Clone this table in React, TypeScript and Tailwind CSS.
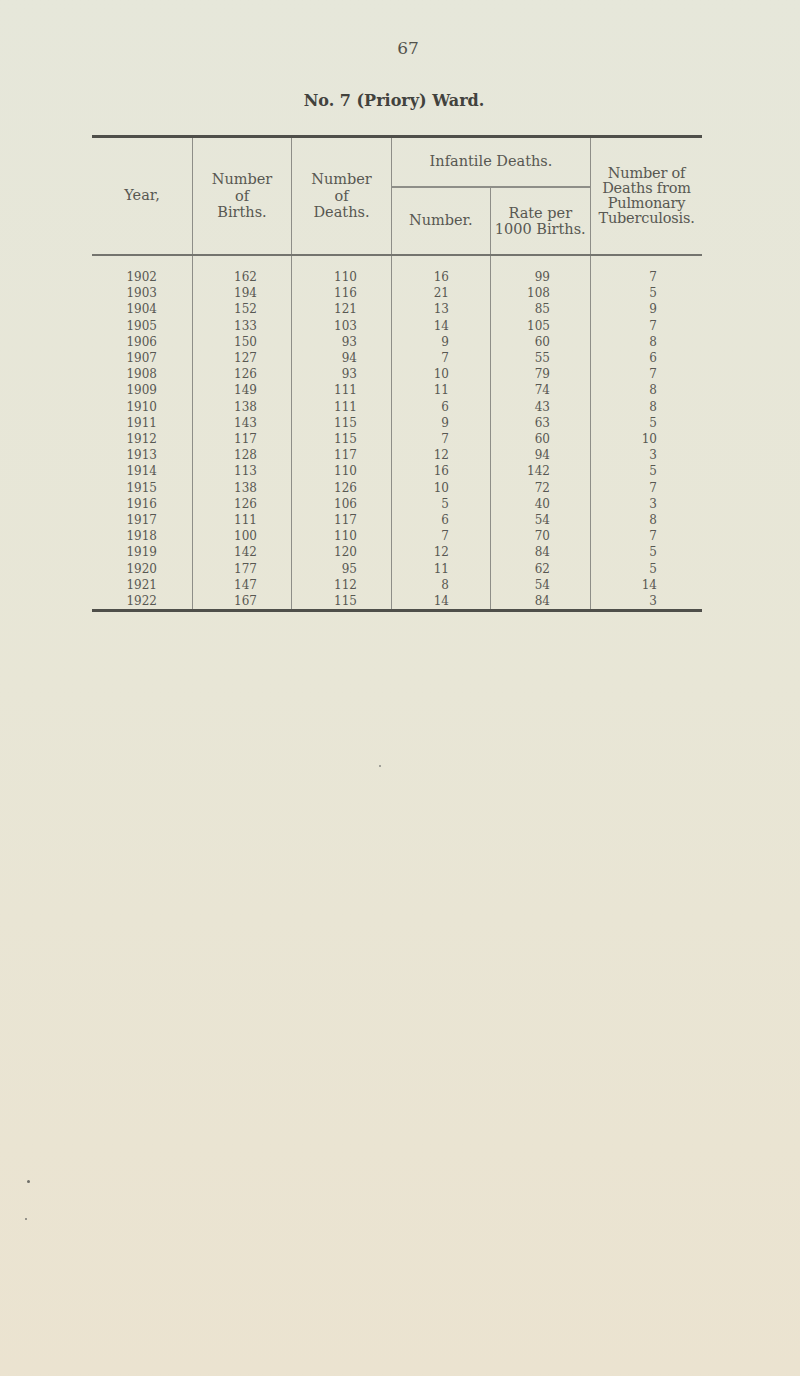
const rows: string[][] = [
  ["1902", "162", "110", "16", "99", "7"],
  ["1903", "194", "116", "21", "108", "5"],
  ["1904", "152", "121", "13", "85", "9"],
  ["1905", "133", "103", "14", "105", "7"],
  ["1906", "150", "93", "9", "60", "8"],
  ["1907", "127", "94", "7", "55", "6"],
  ["1908", "126", "93", "10", "79", "7"],
  ["1909", "149", "111", "11", "74", "8"],
  ["1910", "138", "111", "6", "43", "8"],
  ["1911", "143", "115", "9", "63", "5"],
  ["1912", "117", "115", "7", "60", "10"],
  ["1913", "128", "117", "12", "94", "3"],
  ["1914", "113", "110", "16", "142", "5"],
  ["1915", "138", "126", "10", "72", "7"],
  ["1916", "126", "106", "5", "40", "3"],
  ["1917", "111", "117", "6", "54", "8"],
  ["1918", "100", "110", "7", "70", "7"],
  ["1919", "142", "120", "12", "84", "5"],
  ["1920", "177", "95", "11", "62", "5"],
  ["1921", "147", "112", "8", "54", "14"],
  ["1922", "167", "115", "14", "84", "3"],
];

// width + right padding so the figures line up like the printed columns
const cols = [
  "w-[101px] pr-[35px] border-r border-[#8e8e88]",
  "w-[99px] pr-[34px] border-r border-[#8e8e88]",
  "w-[100px] pr-[34px] border-r border-[#8e8e88]",
  "w-[99px] pr-[41px] border-r border-[#8e8e88]",
  "w-[100px] pr-[40px] border-r border-[#8e8e88]",
  "w-[111px] pr-[45px]",
];

const serif = "font-['DejaVu_Serif',serif]";

export default function App() {
  return (
    <div className={`relative w-full h-[1376px] overflow-hidden bg-gradient-to-b from-[#e6e7da] via-[#e8e6d6] to-[#ebe3d0] ${serif}`}>
      {/* page number */}
      <div className="pt-[37px] pl-[16px] text-center text-[17px] leading-[22px] text-[#52524c]">67</div>

      {/* title */}
      <div className="mt-[32px] pr-[12px] text-center text-[16px] leading-[20px] font-bold text-[#42423d]">
        No. 7 (Priory) Ward.
      </div>

      {/* table */}
      <div className="mt-[24px] ml-[92px] w-[610px] border-t-[3px] border-[#4f4f4a] text-[#585852]">
        {/* header */}
        <div className="flex h-[118px] border-b-2 border-[#74746e] text-[14.5px] text-center">
          <div className="w-[101px] border-r border-[#8e8e88] flex items-center justify-center">Year,</div>
          <div className="w-[99px] border-r border-[#8e8e88] flex items-center justify-center leading-[16.5px]">
            <div>Number<br />of<br />Births.</div>
          </div>
          <div className="w-[100px] border-r border-[#8e8e88] flex items-center justify-center leading-[16.5px]">
            <div>Number<br />of<br />Deaths.</div>
          </div>
          <div className="w-[199px] border-r border-[#8e8e88] flex flex-col">
            <div className="h-[50px] border-b-2 border-[#8e8e88] flex items-center justify-center">Infantile Deaths.</div>
            <div className="flex flex-1">
              <div className="w-[99px] border-r border-[#8e8e88] flex items-center justify-center">Number.</div>
              <div className="w-[100px] flex items-center justify-center leading-[16.5px]">
                <div>Rate per<br />1000 Births.</div>
              </div>
            </div>
          </div>
          <div className="w-[111px] flex items-center justify-center leading-[15px] tracking-[-0.2px]">
            <div>Number of<br />Deaths from<br />Pulmonary<br />Tuberculosis.</div>
          </div>
        </div>

        {/* body */}
        <div className="flex border-b-[3px] border-[#4f4f4a] text-[12px] leading-[16.2px]">
          {cols.map((c, i) => (
            <div key={i} className={`${c} pt-[13px] text-right`}>
              {rows.map(r => (
                <div key={r[0]}>{r[i]}</div>
              ))}
            </div>
          ))}
        </div>
      </div>

      {/* scan specks */}
      <span className="absolute left-[379px] top-[765px] w-[2px] h-[2px] rounded-full bg-[#8a8a84]" />
      <span className="absolute left-[27px] top-[1180px] w-[3px] h-[3px] rounded-full bg-[#6e6e68]" />
      <span className="absolute left-[25px] top-[1218px] w-[2px] h-[2px] rounded-full bg-[#7a7a74]" />
    </div>
  );
}
